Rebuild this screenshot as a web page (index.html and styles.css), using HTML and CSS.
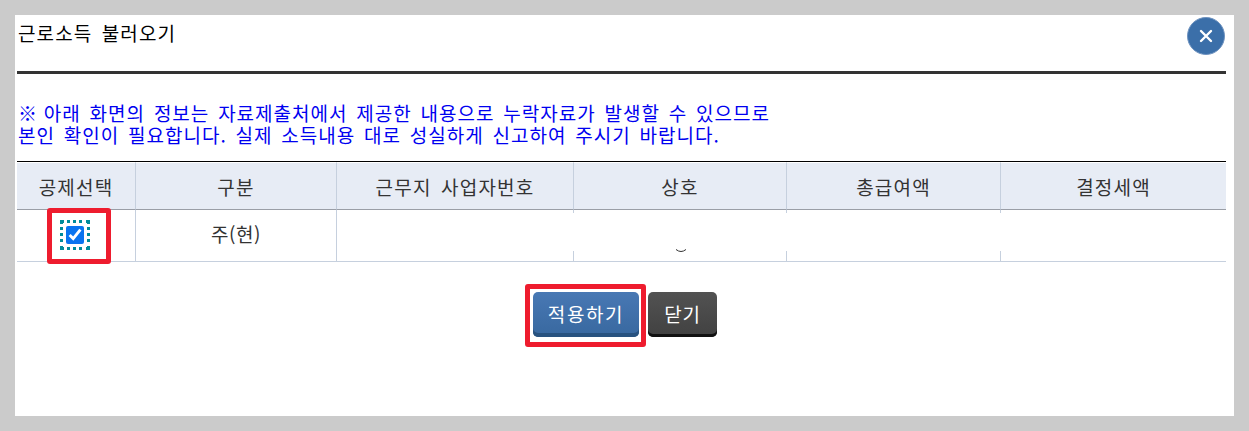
FILE: index.html
```html
<!DOCTYPE html>
<html lang="ko">
<head>
<meta charset="utf-8">
<title>근로소득 불러오기</title>
<link rel="stylesheet" href="styles.css">
</head>
<body>
<div class="modal">
  <header class="modal-head">
    <h1 class="modal-title">근로소득 불러오기</h1>
    <button class="close" type="button" aria-label="닫기">
      <svg width="14" height="14" viewBox="0 0 14 14"><path d="M2 2 L12 12 M12 2 L2 12" stroke="#fff" stroke-width="2.4" stroke-linecap="round" fill="none"/></svg>
    </button>
  </header>
  <p class="notice"><span class="ref-mark">※</span> 아래 화면의 정보는 자료제출처에서 제공한 내용으로 누락자료가 발생할 수 있으므로<br>본인 확인이 필요합니다. 실제 소득내용 대로 성실하게 신고하여 주시기 바랍니다.</p>
  <div class="table-wrap">
    <table class="grid">
      <colgroup>
        <col class="c1"><col class="c2"><col class="c3"><col class="c4"><col class="c5"><col class="c6">
      </colgroup>
      <thead>
        <tr><th>공제선택</th><th>구분</th><th>근무지 사업자번호</th><th>상호</th><th>총급여액</th><th>결정세액</th></tr>
      </thead>
      <tbody>
        <tr>
          <td class="check-cell"><span class="mark-check"><input type="checkbox" class="check" checked></span></td>
          <td class="kind">주(현)</td>
          <td></td>
          <td></td>
          <td></td>
          <td></td>
        </tr>
      </tbody>
    </table>
    <div class="redact"></div>
    <svg class="remnant" width="12" height="4" viewBox="0 0 12 4"><path d="M1 0.5 Q6 4.5 11 0.5" stroke="#333" stroke-width="1" fill="none"/></svg>
  </div>
  <div class="actions">
    <span class="mark-btn"><button class="btn btn-primary" type="button">적용하기</button></span>
    <button class="btn btn-dark" type="button">닫기</button>
  </div>
</div>
</body>
</html>
```

FILE: styles.css
```css
* { box-sizing: border-box; }
html, body { margin: 0; height: 100%; }
body {
  background: #cbcbcb;
  padding: 15px;
  font-family: "Noto Sans CJK KR", "Noto Sans", sans-serif;
  overflow: hidden;
}
.modal {
  position: relative;
  width: 1219px;
  height: 401px;
  background: #fff;
  padding: 0 8px 0 2px;
}
.modal-head {
  height: 59px;
  border-bottom: 3px solid #333;
}
.modal-title {
  margin: 0;
  padding: 5px 0 0 1px;
  font-size: 19px;
  line-height: 26px;
  font-weight: 400;
  color: #000;
  letter-spacing: 1.1px;
  word-spacing: 3px;
}
.close {
  position: absolute;
  top: 2px;
  right: 9px;
  width: 38px;
  height: 38px;
  padding: 0;
  border: 1px solid #6f93c0;
  border-radius: 50%;
  background: #3b6fa9;
  display: flex;
  align-items: center;
  justify-content: center;
}
.notice {
  margin: 28px 0 15px;
  padding-left: 1px;
  font-size: 19px;
  line-height: 22px;
  height: 44px;
  color: #0000f0;
  letter-spacing: 1px;
  word-spacing: 2.5px;
  white-space: nowrap;
}
.ref-mark { font-weight: 700; letter-spacing: -2px; }
.table-wrap { position: relative; }
.grid {
  width: 1209px;
  border-collapse: separate;
  border-spacing: 0;
  table-layout: fixed;
  border-top: 1px solid #000;
}
.c1 { width: 119px; }
.c2 { width: 201px; }
.c3 { width: 237px; }
.c4 { width: 213px; }
.c5 { width: 214px; }
.c6 { width: 225px; }
.grid th {
  height: 48px;
  background: #e7ecf5;
  border-top: 1px solid #fff;
  border-right: 1px solid #c6d0de;
  border-bottom: 1px solid #9a9ea6;
  font-size: 19px;
  font-weight: 400;
  color: #333;
  padding: 0;
  text-align: center;
  letter-spacing: 1.2px;
  word-spacing: 3px;
}
.grid th:last-child, .grid td:last-child { border-right: 0; }
.grid td {
  height: 52px;
  border-right: 1px solid #c6d0de;
  border-bottom: 1px solid #c6d0de;
  padding: 0;
  text-align: center;
  color: #333;
  font-size: 19px;
}
.grid td.kind { padding-bottom: 5px; letter-spacing: 0.5px; }
.mark-check {
  display: flex;
  align-items: center;
  width: 64px;
  height: 56px;
  margin: -2px 0 -3px 30px;
  padding: 0 0 3px 14px;
  border: 5px solid #ee1c2e;
  border-radius: 3px;
}
.check {
  width: 18px;
  height: 18px;
  margin: 0;
  accent-color: #0a74f0;
  outline: 3px dotted #008c9c;
  outline-offset: 3px;
}
.redact {
  position: absolute;
  left: 320px;
  top: 52px;
  width: 889px;
  height: 38px;
  background: #fff;
}
.remnant {
  position: absolute;
  left: 658px;
  top: 88px;
}
.actions {
  display: flex;
  justify-content: center;
  align-items: flex-start;
  gap: 2px;
  margin-top: 22px;
  padding-right: 1px;
}
.mark-btn {
  display: block;
  width: 121px;
  height: 63px;
  padding: 3px 0 0 3px;
  border: 5px solid #ee1c2e;
  border-radius: 3px;
}
.btn {
  display: block;
  height: 45px;
  padding: 0 0 3px;
  border: 0;
  border-radius: 5px;
  color: #fff;
  font-family: inherit;
  font-size: 19px;
  line-height: 1;
  letter-spacing: 0.8px;
}
.btn-primary {
  width: 106px;
  letter-spacing: 1.6px;
  background: linear-gradient(#4878b4, #38689f);
  box-shadow: inset 0 -4px 0 #28527f;
}
.btn-dark {
  width: 69px;
  margin-top: 8px;
  background: linear-gradient(#525252, #414141);
  box-shadow: inset 0 -3px 0 #111;
}
```
